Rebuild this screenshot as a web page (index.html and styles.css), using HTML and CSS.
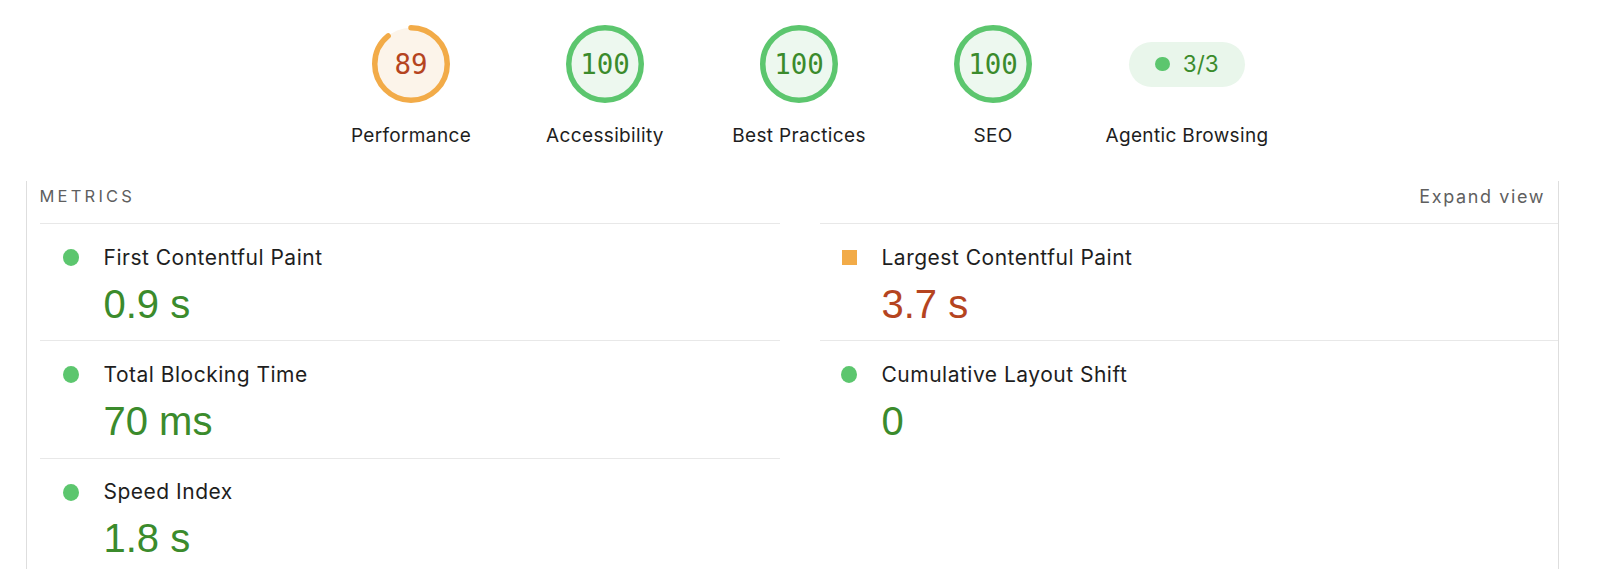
FILE: index.html
```html
<!DOCTYPE html>
<html lang="en">
<head>
<meta charset="utf-8">
<title>Lighthouse report</title>
<link rel="stylesheet" href="styles.css">
</head>
<body>
<div class="gauges">
  <div class="gauge-item">
    <div class="gauge">
      <svg class="gauge-svg" viewBox="0 0 78 78" width="78" height="78">
        <circle class="g-bg avg-bg" cx="39" cy="39" r="36.25"/>
        <circle class="g-arc avg-arc" cx="39" cy="39" r="36.25" stroke-dasharray="202.7 227.8" transform="rotate(-90 39 39)"/>
      </svg>
      <span class="g-num avg-num">89</span>
    </div>
    <div class="g-label">Performance</div>
  </div>
  <div class="gauge-item">
    <div class="gauge">
      <svg class="gauge-svg" viewBox="0 0 78 78" width="78" height="78">
        <circle class="g-bg pass-bg" cx="39" cy="39" r="36.25"/>
        <circle class="g-arc pass-arc" cx="39" cy="39" r="36.25"/>
      </svg>
      <span class="g-num pass-num">100</span>
    </div>
    <div class="g-label">Accessibility</div>
  </div>
  <div class="gauge-item">
    <div class="gauge">
      <svg class="gauge-svg" viewBox="0 0 78 78" width="78" height="78">
        <circle class="g-bg pass-bg" cx="39" cy="39" r="36.25"/>
        <circle class="g-arc pass-arc" cx="39" cy="39" r="36.25"/>
      </svg>
      <span class="g-num pass-num">100</span>
    </div>
    <div class="g-label">Best Practices</div>
  </div>
  <div class="gauge-item">
    <div class="gauge">
      <svg class="gauge-svg" viewBox="0 0 78 78" width="78" height="78">
        <circle class="g-bg pass-bg" cx="39" cy="39" r="36.25"/>
        <circle class="g-arc pass-arc" cx="39" cy="39" r="36.25"/>
      </svg>
      <span class="g-num pass-num">100</span>
    </div>
    <div class="g-label">SEO</div>
  </div>
  <div class="gauge-item">
    <div class="gauge">
      <div class="pill"><span class="pill-dot"></span><span class="pill-text">3/3</span></div>
    </div>
    <div class="g-label">Agentic Browsing</div>
  </div>
</div>

<section class="metrics">
  <div class="metrics-head">
    <span class="metrics-title">METRICS</span>
    <span class="expand">Expand view</span>
  </div>
  <div class="metrics-grid">
    <div class="metric">
      <span class="ind"><span class="dot"></span></span>
      <span class="m-label">First Contentful Paint</span>
      <span class="m-value pass">0.9 s</span>
    </div>
    <div class="metric right">
      <span class="ind"><span class="square"></span></span>
      <span class="m-label">Largest Contentful Paint</span>
      <span class="m-value avg">3.7 s</span>
    </div>
    <div class="metric">
      <span class="ind"><span class="dot"></span></span>
      <span class="m-label">Total Blocking Time</span>
      <span class="m-value pass">70 ms</span>
    </div>
    <div class="metric right">
      <span class="ind"><span class="dot"></span></span>
      <span class="m-label">Cumulative Layout Shift</span>
      <span class="m-value pass">0</span>
    </div>
    <div class="metric">
      <span class="ind"><span class="dot"></span></span>
      <span class="m-label">Speed Index</span>
      <span class="m-value pass">1.8 s</span>
    </div>
  </div>
</section>
</body>
</html>
```

FILE: styles.css
```css
* { box-sizing: border-box; }

body {
  margin: 0;
  background: #ffffff;
  font-family: "Inter", "Liberation Sans", sans-serif;
  color: #212121;
  width: 1600px;
  height: 578px;
  overflow: hidden;
}

.gauges {
  width: 1598px;
  display: flex;
  justify-content: center;
  padding-top: 25px;
}

.gauge-item {
  width: 194px;
  display: flex;
  flex-direction: column;
  align-items: center;
}

.gauge {
  width: 194px;
  height: 78px;
  display: grid;
  place-items: center;
}

.gauge > * { grid-area: 1 / 1; }

.gauge-svg { display: block; }

.g-arc {
  fill: none;
  stroke-width: 5.5;
  stroke-linecap: round;
}
.avg-bg { fill: #fcf4ea; }
.avg-arc { stroke: #f2ab48; }
.pass-bg { fill: #edf8ef; }
.pass-arc { stroke: #5cc66e; stroke-linecap: butt; }

.g-num {
  font-family: "DejaVu Sans Mono", "Liberation Mono", monospace;
  font-size: 27.5px;
  line-height: 32px;
}
.avg-num { color: #b5441f; }
.pass-num { color: #3b8b2c; }

.pill {
  width: 116px;
  height: 45px;
  border-radius: 23px;
  background: #e9f6eb;
  display: flex;
  align-items: center;
  justify-content: center;
  gap: 13px;
}
.pill-dot {
  width: 14.5px;
  height: 14.5px;
  border-radius: 50%;
  background: #5cc66e;
}
.pill-text {
  font-size: 22.5px;
  color: #3b8b2c;
  line-height: 26px;
}

.g-label {
  margin-top: 21px;
  font-size: 19px;
  letter-spacing: 0.35px;
  line-height: 24px;
  color: #1e1e1e;
  white-space: nowrap;
}

.metrics {
  margin-top: 33px;
  margin-left: 26px;
  width: 1533px;
  height: 388px;
  overflow: hidden;
  border-left: 1.5px solid #dedede;
  border-right: 1.5px solid #dedede;
  padding-left: 12.5px;
}

.metrics-head {
  height: 42px;
  display: flex;
  justify-content: space-between;
  align-items: flex-start;
  padding: 2px 13px 0 0;
  line-height: 27px;
}

.metrics-title {
  font-size: 16.5px;
  letter-spacing: 3.2px;
  color: #5f5f5f;
}

.expand {
  font-size: 18px;
  letter-spacing: 1.6px;
  color: #5f5f5f;
}

.metrics-grid {
  display: grid;
  grid-template-columns: 740px 1fr;
  column-gap: 40px;
}

.metric {
  border-top: 1.5px solid #e8e8e8;
  height: 117.3px;
  padding: 20.5px 0 0 23.5px;
  display: grid;
  grid-template-columns: 16px 1fr;
  grid-template-rows: 26px 46px;
  column-gap: 24.5px;
  row-gap: 10px;
  align-items: center;
}

.metric.right {
  padding-left: 21.5px;
}

.ind {
  display: flex;
  justify-content: center;
  align-items: center;
}
.dot {
  width: 17px;
  height: 17px;
  border-radius: 50%;
  background: #5cc66e;
}
.square {
  width: 15px;
  height: 15px;
  background: #f2ab48;
}

.m-label {
  font-size: 21px;
  letter-spacing: 0.5px;
  line-height: 26px;
  color: #1e1e1e;
  white-space: nowrap;
}

.m-value {
  grid-column: 2;
  font-family: "Liberation Sans", "Arial", sans-serif;
  font-size: 40px;
  line-height: 46px;
}
.m-value.pass { color: #3b8b2c; }
.m-value.avg { color: #b5441f; }
```
